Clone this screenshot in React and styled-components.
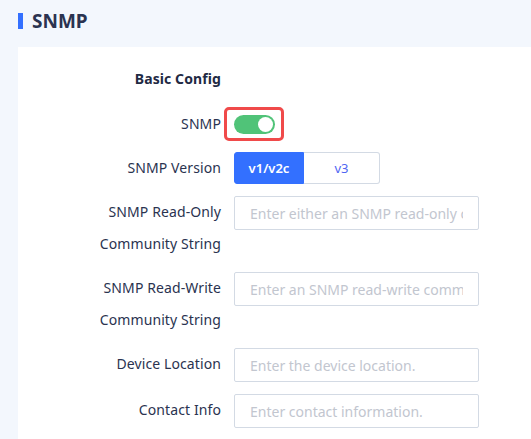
import React, { useState } from "react";
import styled, { createGlobalStyle } from "styled-components";

const GlobalStyle = createGlobalStyle`
  body {
    margin: 0;
    background: #f3f7fd;
    font-family: "Noto Sans", "Open Sans", Arial, sans-serif;
    color: #1f2a44;
  }
`;

const Page = styled.div`
  padding: 0 0 0 18px;
`;

const TitleBar = styled.div`
  display: flex;
  align-items: center;
  gap: 9px;
  height: 47px;
  padding-bottom: 5px;
  box-sizing: border-box;
`;

const Marker = styled.span`
  width: 5px;
  height: 16px;
  background: #3370ff;
`;

const Title = styled.h1`
  margin: 0;
  font-size: 19px;
  font-weight: 700;
  color: #2b3350;
`;

const Card = styled.div`
  background: #fff;
  padding-top: 16px;
  min-height: 380px;
`;

const Row = styled.div`
  display: grid;
  grid-template-columns: 203px 1fr;
  column-gap: 13px;
  align-items: start;
  margin-bottom: ${(p) => p.gap ?? 12}px;
`;

const Label = styled.div`
  text-align: right;
  font-size: 14px;
  line-height: 32px;
  letter-spacing: 0.1px;
  font-weight: ${(p) => (p.bold ? 700 : 400)};
  color: ${(p) => (p.bold ? "#1f2a44" : "#2a3350")};
`;

const Control = styled.div`
  display: flex;
  align-items: center;
  min-height: 32px;
`;

const Highlight = styled.div`
  position: relative;
  display: flex;
  align-items: center;
  &::after {
    content: "";
    position: absolute;
    left: -10px;
    right: -9px;
    top: -8px;
    bottom: -7px;
    border: 3px solid #f04a4a;
    border-radius: 5px;
  }
`;

const Switch = styled.button`
  position: relative;
  width: 41px;
  height: 19px;
  border: none;
  border-radius: 10px;
  padding: 0;
  background: ${(p) => (p.on ? "#50c378" : "#c0c4cc")};
  cursor: pointer;
  &::after {
    content: "";
    position: absolute;
    top: 2px;
    left: ${(p) => (p.on ? "24px" : "2px")};
    width: 15px;
    height: 15px;
    border-radius: 50%;
    background: #fff;
  }
`;

const Segmented = styled.div`
  display: flex;
  height: 32px;
`;

const Segment = styled.button`
  width: ${(p) => p.w}px;
  height: 32px;
  box-sizing: border-box;
  font-family: inherit;
  font-size: 13px;
  font-weight: ${(p) => (p.active ? 600 : 400)};
  border: 1px solid ${(p) => (p.active ? "#3370ff" : "#d3dae4")};
  background: ${(p) => (p.active ? "#3370ff" : "#fff")};
  color: ${(p) => (p.active ? "#fff" : "#4f66f2")};
  border-radius: ${(p) => (p.first ? "3px 0 0 3px" : "0 3px 3px 0")};
  border-left-width: ${(p) => (p.first ? 1 : 0)}px;
  padding: 0;
  cursor: pointer;
`;

const Input = styled.input`
  width: 245px;
  height: 34px;
  box-sizing: border-box;
  border: 1px solid #d3dae4;
  border-radius: 2px;
  padding: 0 15px;
  font-family: inherit;
  font-size: 14px;
  color: #333;
  outline: none;
  &::placeholder {
    color: #c2c6cf;
  }
`;

export default function App() {
  const [on, setOn] = useState(true);
  const [version, setVersion] = useState("v1");

  return (
    <Page>
      <GlobalStyle />
      <TitleBar>
        <Marker />
        <Title>SNMP</Title>
      </TitleBar>
      <Card>
        <Row gap={13}>
          <Label bold>Basic Config</Label>
        </Row>
        <Row>
          <Label>SNMP</Label>
          <Control>
            <Highlight>
              <Switch on={on} onClick={() => setOn(!on)} />
            </Highlight>
          </Control>
        </Row>
        <Row>
          <Label>SNMP Version</Label>
          <Segmented>
            <Segment first w={70} active={version === "v1"} onClick={() => setVersion("v1")}>
              v1/v2c
            </Segment>
            <Segment w={76} active={version === "v3"} onClick={() => setVersion("v3")}>
              v3
            </Segment>
          </Segmented>
        </Row>
        <Row>
          <Label>
            SNMP Read-Only
            <br />
            Community String
          </Label>
          <Input placeholder="Enter either an SNMP read-only community string." />
        </Row>
        <Row>
          <Label>
            SNMP Read-Write
            <br />
            Community String
          </Label>
          <Input placeholder="Enter an SNMP read-write community string." />
        </Row>
        <Row>
          <Label>Device Location</Label>
          <Input placeholder="Enter the device location." />
        </Row>
        <Row>
          <Label>Contact Info</Label>
          <Input placeholder="Enter contact information." />
        </Row>
      </Card>
    </Page>
  );
}
